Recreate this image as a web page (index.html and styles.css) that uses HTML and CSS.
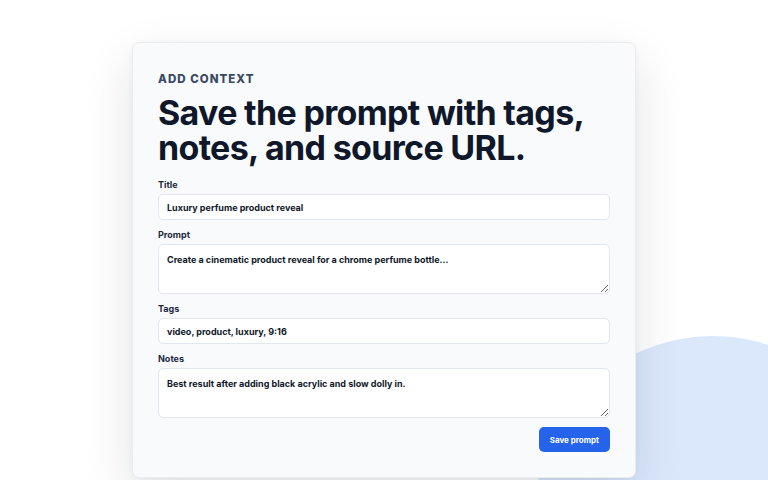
FILE: index.html
```html
<!DOCTYPE html>
<html lang="en">
<head>
<meta charset="utf-8">
<title>Add context</title>
<link rel="stylesheet" href="styles.css">
</head>
<body>
<div class="backdrop"><div class="blob"></div></div>
<main class="card">
  <p class="eyebrow">ADD CONTEXT</p>
  <h1 class="headline">Save the prompt with tags, notes, and source URL.</h1>
  <form class="form">
    <label class="field">
      <span class="label">Title</span>
      <input class="control" type="text" value="Luxury perfume product reveal">
    </label>
    <label class="field">
      <span class="label">Prompt</span>
      <textarea class="control area">Create a cinematic product reveal for a chrome perfume bottle...</textarea>
    </label>
    <label class="field">
      <span class="label">Tags</span>
      <input class="control" type="text" value="video, product, luxury, 9:16">
    </label>
    <label class="field">
      <span class="label">Notes</span>
      <textarea class="control area">Best result after adding black acrylic and slow dolly in.</textarea>
    </label>
    <div class="actions">
      <button class="btn" type="button">Save prompt</button>
    </div>
  </form>
</main>
</body>
</html>
```
FILE: styles.css
```css
* { box-sizing: border-box; }
html, body {
  margin: 0;
  padding: 0;
  background: #ffffff;
  font-family: Inter, "Liberation Sans", sans-serif;
  overflow: hidden;
  width: 768px;
  height: 480px;
}
body { position: relative; }
.backdrop {
  position: absolute;
  inset: 0;
  overflow: hidden;
  z-index: 0;
}
.blob {
  position: absolute;
  left: 535px;
  top: 336px;
  width: 356px;
  height: 356px;
  border-radius: 50%;
  background: #dbe8fc;
}
.card {
  position: relative;
  z-index: 1;
  margin: 42px 0 0 132px;
  width: 504px;
  padding: 28px 25px 25px;
  background: #f8fafc;
  border: 1px solid #e9edf2;
  border-radius: 7px;
  box-shadow: 0 18px 50px rgba(15, 23, 42, 0.12), 0 2px 6px rgba(15, 23, 42, 0.04);
}
.eyebrow {
  margin: 0;
  font-size: 11.5px;
  line-height: 16px;
  font-weight: 800;
  letter-spacing: 0.09em;
  color: #3a4962;
}
.headline {
  margin: 8px 0 0;
  font-size: 34px;
  line-height: 35px;
  font-weight: 700;
  letter-spacing: -0.02em;
  color: #0f172a;
}
.form {
  margin-top: 12px;
  display: flex;
  flex-direction: column;
  gap: 7px;
}
.field {
  display: flex;
  flex-direction: column;
  gap: 2px;
}
.label {
  font-size: 9px;
  line-height: 15px;
  font-weight: 700;
  color: #1b2940;
}
.control {
  display: block;
  width: 100%;
  height: 26px;
  margin: 0;
  padding: 0 8px;
  border: 1px solid #e2e8f0;
  border-radius: 5px;
  background: #ffffff;
  font-family: Inter, "Liberation Sans", sans-serif;
  font-size: 9px;
  font-weight: 700;
  color: #0f172a;
  outline: none;
}
.area {
  height: 50px;
  padding: 8px 8px;
  line-height: 13px;
  resize: vertical;
}
.actions {
  display: flex;
  justify-content: flex-end;
  margin-top: 2px;
}
.btn {
  height: 25px;
  padding: 0 11px;
  border: none;
  border-radius: 5px;
  background: #2563eb;
  color: #ffffff;
  font-family: Inter, "Liberation Sans", sans-serif;
  font-size: 8px;
  font-weight: 700;
}
```
